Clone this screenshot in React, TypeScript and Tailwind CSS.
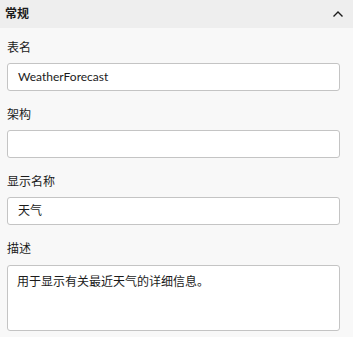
import React from "react";

// ─── Field ───────────────────────────────────────────────────────────────────

function Field({
  label,
  value,
  multiline,
}: {
  label: string;
  value?: string;
  multiline?: boolean;
}) {
  return (
    <div className="flex flex-col">
      <label className="h-[20px] leading-[20px] text-[12px] text-[#1b1b1b]">{label}</label>
      {multiline ? (
        <div className="mt-[6px] h-[66px] rounded-[3px] border border-[#c4c4c4] bg-white px-[9px] pt-[7px] text-[12px] leading-[18px] text-[#1b1b1b]">
          {value}
        </div>
      ) : (
        <div className="mt-[5px] flex h-[28px] items-center rounded-[3px] border border-[#c4c4c4] bg-white pl-[10px] text-[12px] text-[#1b1b1b]">
          {value}
        </div>
      )}
    </div>
  );
}

// ─── Main ────────────────────────────────────────────────────────────────────

export default function App() {
  return (
    <div
      className="h-[337px] w-[353px] overflow-hidden bg-[#f8f8f8]"
      style={{ fontFamily: 'Lato, "Noto Sans CJK SC", sans-serif' }}
    >
      <div className="flex h-[28px] items-center justify-between bg-[#eeeeee] pl-[5px] pr-[9px]">
        <span className="text-[12px] font-bold text-[#1b1b1b]">常规</span>
        {/* chevron up */}
        <svg className="h-[12px] w-[12px] text-[#1b1b1b]" viewBox="0 0 12 12" fill="none" stroke="currentColor" strokeWidth={1.4}>
          <path d="M1.5 8.5L6 4L10.5 8.5" />
        </svg>
      </div>
      <div className="flex flex-col gap-[14px] px-[7px] pr-[13px] pt-[10px]">
        <Field label="表名" value="WeatherForecast" />
        <Field label="架构" />
        <Field label="显示名称" value="天气" />
        <Field label="描述" value="用于显示有关最近天气的详细信息。" multiline />
      </div>
    </div>
  );
}
